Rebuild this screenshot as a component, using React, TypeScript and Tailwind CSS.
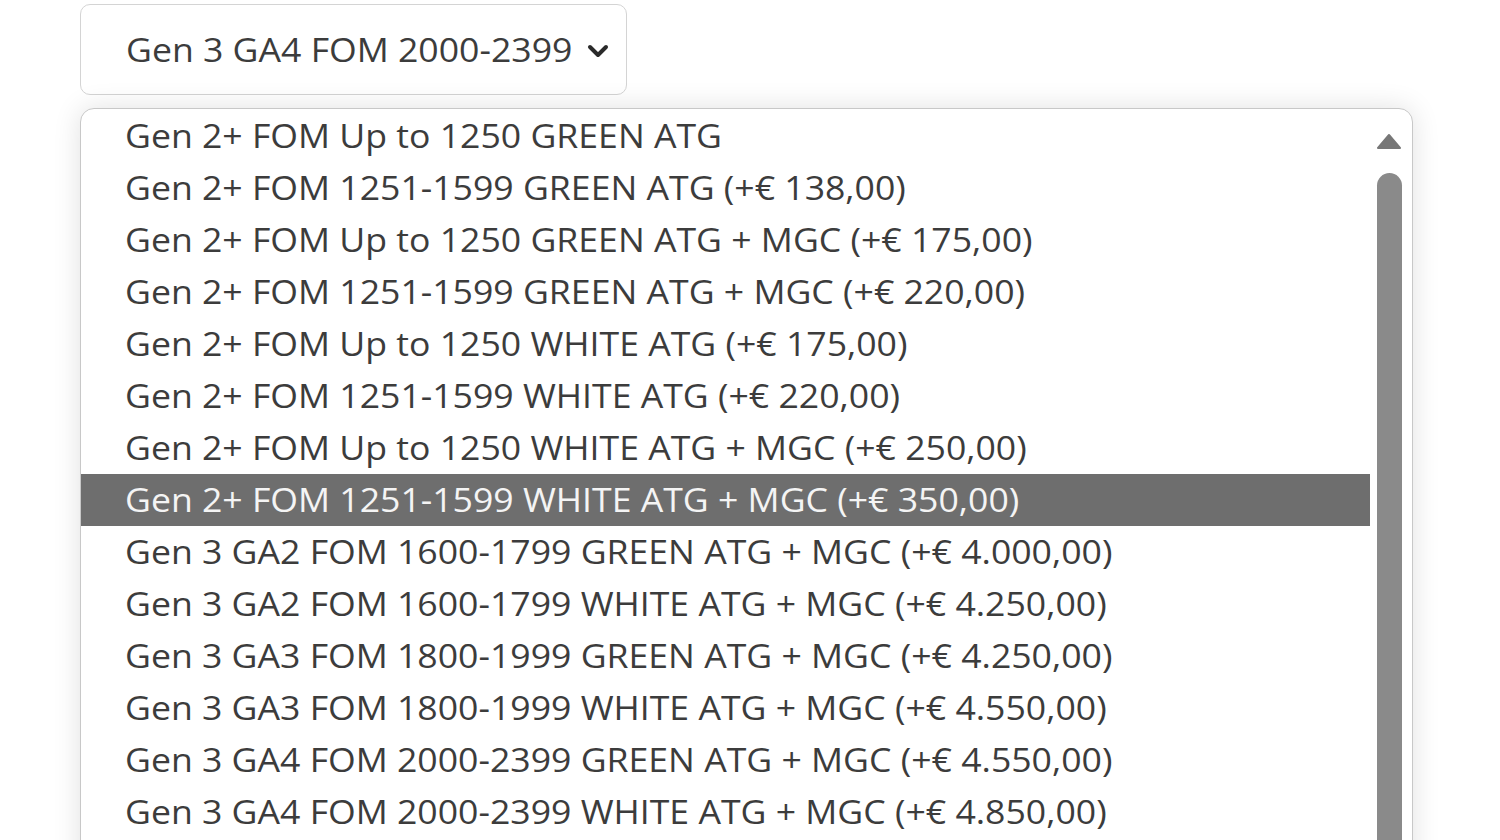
const options = [
  "Gen 2+ FOM Up to 1250 GREEN ATG",
  "Gen 2+ FOM 1251-1599 GREEN ATG (+€ 138,00)",
  "Gen 2+ FOM Up to 1250 GREEN ATG + MGC (+€ 175,00)",
  "Gen 2+ FOM 1251-1599 GREEN ATG + MGC (+€ 220,00)",
  "Gen 2+ FOM Up to 1250 WHITE ATG (+€ 175,00)",
  "Gen 2+ FOM 1251-1599 WHITE ATG (+€ 220,00)",
  "Gen 2+ FOM Up to 1250 WHITE ATG + MGC (+€ 250,00)",
  "Gen 2+ FOM 1251-1599 WHITE ATG + MGC (+€ 350,00)",
  "Gen 3 GA2 FOM 1600-1799 GREEN ATG + MGC (+€ 4.000,00)",
  "Gen 3 GA2 FOM 1600-1799 WHITE ATG + MGC (+€ 4.250,00)",
  "Gen 3 GA3 FOM 1800-1999 GREEN ATG + MGC (+€ 4.250,00)",
  "Gen 3 GA3 FOM 1800-1999 WHITE ATG + MGC (+€ 4.550,00)",
  "Gen 3 GA4 FOM 2000-2399 GREEN ATG + MGC (+€ 4.550,00)",
  "Gen 3 GA4 FOM 2000-2399 WHITE ATG + MGC (+€ 4.850,00)",
];

const selected = 7;

export default function App() {
  return (
    <div className="h-[840px] w-[1500px] overflow-hidden bg-white font-['Open_Sans','Noto_Sans',sans-serif] text-[#3c3c3c]">
      <div className="ml-[80px] mt-[4px] flex h-[91px] w-[547px] items-center rounded-[10px] border border-[#d4d4d4] pl-[45px]">
        <span className="inline-block origin-left scale-x-[1.113] text-[32px] leading-none">
          Gen 3 GA4 FOM 2000-2399
        </span>
        <svg className="ml-[60px] mt-[2px]" width="22" height="14" viewBox="0 0 22 14">
          <path d="M3 3 L11 11 L19 3" fill="none" stroke="#2a2a2a" strokeWidth="4" strokeLinecap="round" strokeLinejoin="round" />
        </svg>
      </div>

      <div className="ml-[80px] mt-[13px] flex w-[1333px] rounded-t-[14px] border border-[#c8c8c8] bg-white shadow-[0_0_28px_rgba(0,0,0,0.12)]">
        <div className="flex-1 pt-[1px]">
          {options.map((opt, i) => (
            <div
              key={opt}
              className={`flex h-[52px] items-center pl-[44px] whitespace-nowrap ${
                i === selected ? "bg-[#6e6e6e] text-[#f4f4f4]" : ""
              }`}
            >
              <span className="inline-block origin-left scale-x-[1.113] text-[32px] leading-none">{opt}</span>
            </div>
          ))}
        </div>
        <div className="flex w-[42px] flex-col items-center pr-[4px] pt-[24px]">
          <svg width="26" height="16" viewBox="0 0 26 16">
            <path d="M13 2 L24 15 L2 15 Z" fill="#777" stroke="#777" strokeWidth="2" strokeLinejoin="round" />
          </svg>
          <div className="mt-[24px] h-[700px] w-[25px] rounded-t-full bg-[#8a8a8a]" />
        </div>
      </div>
    </div>
  );
}
